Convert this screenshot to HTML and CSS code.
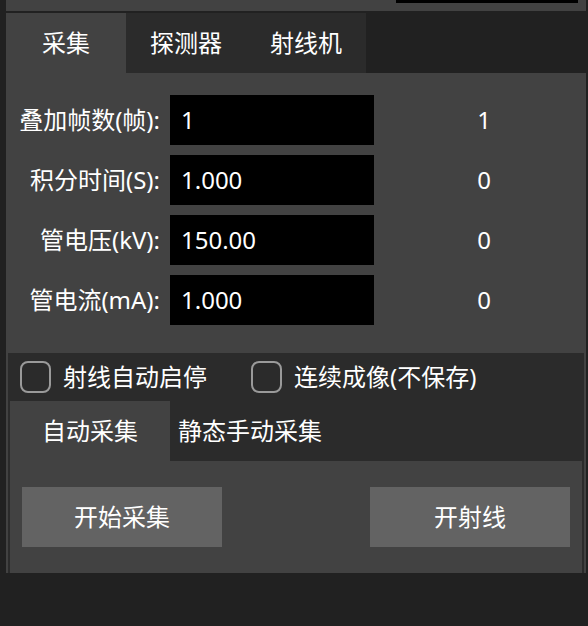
FILE: index.html
```html
<!DOCTYPE html>
<html lang="zh-CN">
<head>
<meta charset="utf-8">
<title>采集</title>
<link rel="stylesheet" href="styles.css">
</head>
<body>
<div class="app">
  <div class="top"><div class="top-field"></div></div>
  <div class="tabbar">
    <div class="tab active">采集</div>
    <div class="tab">探测器</div>
    <div class="tab">射线机</div>
  </div>
  <div class="pane">
    <div class="form">
      <div class="label">叠加帧数(帧):</div>
      <div class="input">1</div>
      <div class="value">1</div>
      <div class="label">积分时间(S):</div>
      <div class="input">1.000</div>
      <div class="value">0</div>
      <div class="label">管电压(kV):</div>
      <div class="input">150.00</div>
      <div class="value">0</div>
      <div class="label">管电流(mA):</div>
      <div class="input">1.000</div>
      <div class="value">0</div>
    </div>
    <div class="group">
      <div class="checks">
        <label class="check"><span class="box"></span><span>射线自动启停</span></label>
        <label class="check"><span class="box"></span><span>连续成像(不保存)</span></label>
      </div>
      <div class="subtabbar">
        <div class="subtab active">自动采集</div>
        <div class="subtab">静态手动采集</div>
      </div>
      <div class="subpane">
        <div class="btn">开始采集</div>
        <div class="btn">开射线</div>
      </div>
    </div>
  </div>
</div>
</body>
</html>
```

FILE: styles.css
```css
html, body {
  margin: 0;
  padding: 0;
  background: #212121;
}
body {
  font-family: "Noto Sans", "Noto Sans CJK SC", sans-serif;
  font-size: 24px;
  color: #ffffff;
  width: 588px;
  height: 626px;
  overflow: hidden;
}
.app {
  margin-left: 6px;
  width: 580px;
}
.top {
  height: 11px;
  background: #424242;
  display: flex;
}
.top-field {
  margin-left: 390px;
  width: 182px;
  height: 3px;
  background: #000;
}
.tabbar {
  margin-top: 2px;
  height: 60px;
  display: flex;
}
.tab {
  width: 120px;
  height: 60px;
  line-height: 60px;
  text-align: center;
  background: #2b2b2b;
}
.tab.active {
  background: #424242;
}
.pane {
  background: #424242;
  height: 500px;
  display: flex;
  flex-direction: column;
}
.form {
  padding-top: 22px;
  display: grid;
  grid-template-columns: 154px 204px 200px;
  grid-auto-rows: 50px;
  column-gap: 10px;
  row-gap: 10px;
}
.label {
  text-align: right;
  line-height: 50px;
  white-space: nowrap;
}
.input {
  background: #000;
  line-height: 50px;
  padding-left: 11px;
}
.value {
  text-align: center;
  line-height: 50px;
}
.group {
  margin: 28px 2px 0 2px;
  background: #2b2b2b;
  padding: 0 2px;
  display: flex;
  flex-direction: column;
}
.checks {
  height: 48px;
  display: flex;
  align-items: center;
  padding-left: 10px;
  gap: 44px;
}
.check {
  display: flex;
  align-items: center;
  gap: 12px;
  line-height: 48px;
}
.box {
  width: 27px;
  height: 28px;
  border: 2px solid #9a9a9a;
  border-radius: 8px;
  box-sizing: content-box;
}
.subtabbar {
  height: 60px;
  display: flex;
}
.subtab {
  width: 160px;
  line-height: 60px;
  text-align: center;
}
.subtab.active {
  background: #424242;
}
.subpane {
  background: #424242;
  height: 112px;
  padding: 26px 12px;
  box-sizing: border-box;
  display: flex;
  justify-content: space-between;
}
.btn {
  width: 200px;
  height: 60px;
  line-height: 60px;
  text-align: center;
  background: #636363;
}
```
